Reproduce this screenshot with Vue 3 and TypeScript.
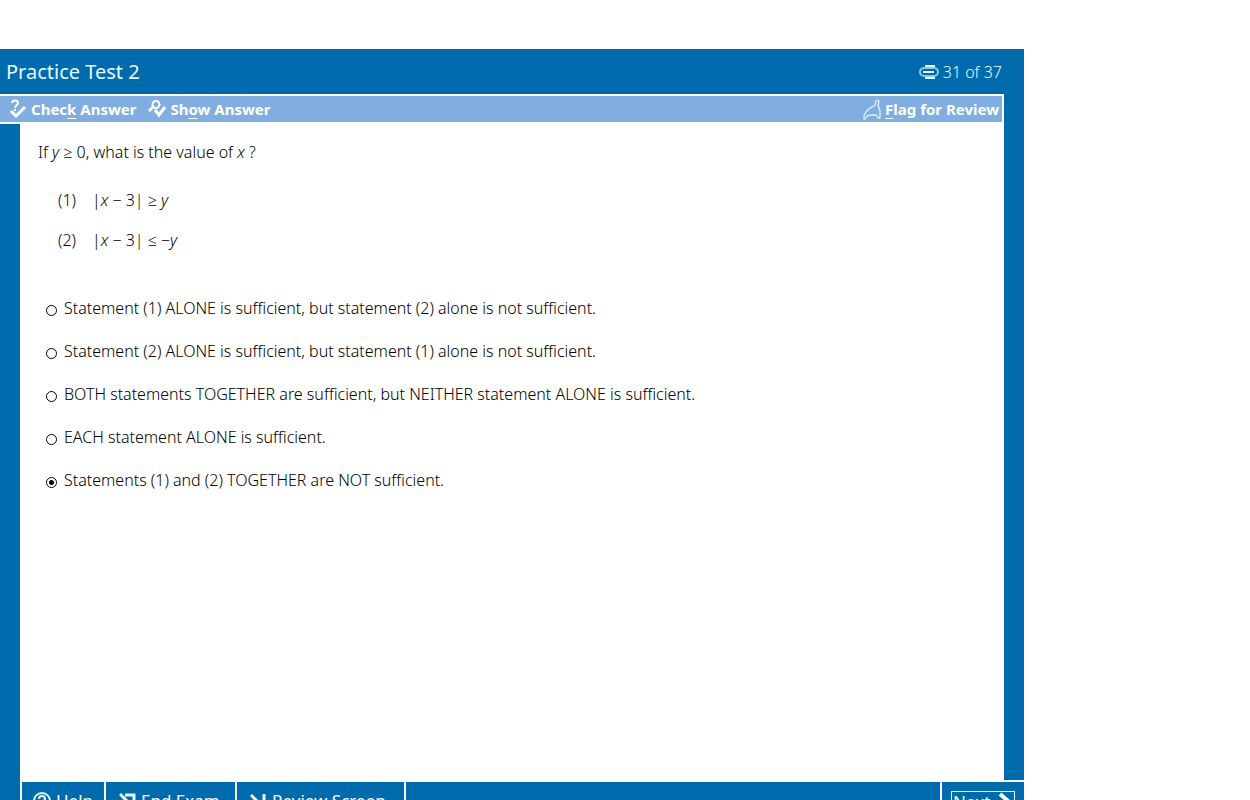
<script setup lang="ts">
import { ref } from 'vue'

const choices: string[] = [
  'Statement (1) ALONE is sufficient, but statement (2) alone is not sufficient.',
  'Statement (2) ALONE is sufficient, but statement (1) alone is not sufficient.',
  'BOTH statements TOGETHER are sufficient, but NEITHER statement ALONE is sufficient.',
  'EACH statement ALONE is sufficient.',
  'Statements (1) and (2) TOGETHER are NOT sufficient.',
]
const picked = ref<number>(4)
</script>

<template>
  <div class="screen">
    <div class="exam">
      <header class="title-bar">
        <h1>Practice Test 2</h1>
        <div class="progress">
          <svg width="20" height="16" viewBox="0 0 20 16" fill="none">
            <rect x="1" y="4" width="18" height="8" rx="4" stroke="#8fc7f0" stroke-width="2" />
            <path d="M6 2H16M4 8H15M6 14H16" stroke="#e4fbff" stroke-width="2" />
          </svg>
          <span>31 of 37</span>
        </div>
      </header>

      <div class="middle">
        <div class="sheet">
          <nav class="tools">
            <button type="button">
              <svg width="18" height="20" viewBox="0 0 18 20" fill="none" stroke="#fff">
                <path d="M3 4C3 1 9 0.5 9 4C9 6 6 6 6 9M6 10V12" stroke-width="2" />
                <path d="M2 12L7 17L16 8" stroke-width="3" />
              </svg>
              <span>Chec<u>k</u> Answer</span>
            </button>
            <button type="button">
              <svg width="18" height="20" viewBox="0 0 18 20" fill="none" stroke="#fff">
                <circle cx="8" cy="5.5" r="3.5" stroke-width="2" />
                <path d="M5 8L1 12" stroke-width="2.5" />
                <path d="M7 11L11 16L17 8" stroke-width="3" />
              </svg>
              <span>Sh<u>o</u>w Answer</span>
            </button>
            <button type="button" class="flag">
              <svg width="18" height="21" viewBox="0 0 18 21" fill="none" stroke="#e0f0ff" stroke-width="1.3" stroke-linejoin="round">
                <path d="M1 20L1 17L3 13L6 10L12 6L13 2L15 1L16 3L15 6L17 12V19L15 19L13 16H8L4 17L2 20Z" />
              </svg>
              <span><u>F</u>lag for Review</span>
            </button>
          </nav>

          <div class="body">
            <div class="rail"></div>
            <main class="question">
              <p class="stem">If <i>y</i> ≥ 0, what is the value of <i>x</i> ?</p>
              <div class="statements">
                <p><span class="num">(1)</span><span>|<i>x</i> − 3| ≥ <i>y</i></span></p>
                <p><span class="num">(2)</span><span>|<i>x</i> − 3| ≤ −<i>y</i></span></p>
              </div>
              <form class="choices">
                <label v-for="(choice, i) in choices" :key="i">
                  <input v-model="picked" type="radio" name="answer" :value="i" />
                  <span>{{ choice }}</span>
                </label>
              </form>
            </main>
          </div>
        </div>
        <div class="rail"></div>
      </div>

      <footer class="bottom">
        <div class="rail"></div>
        <nav class="actions">
          <button type="button" class="help">
            <svg width="20" height="20" viewBox="0 0 20 20" fill="none" stroke="#e4fbff" stroke-width="2">
              <circle cx="10" cy="10" r="8" />
              <path d="M7 8C7 4 13 4 13 8C13 10 10 10 10 12M10 13V15" />
            </svg>
            <span>Help</span>
          </button>
          <button type="button" class="end">
            <svg width="18" height="20" viewBox="0 0 18 20" fill="none" stroke="#e4fbff" stroke-width="3">
              <path d="M1 3L12 14M6 4H15V17H4" />
            </svg>
            <span>End Exam</span>
          </button>
          <button type="button" class="review">
            <svg width="18" height="20" viewBox="0 0 18 20" fill="none" stroke="#e4fbff" stroke-width="3">
              <path d="M1 4L12 15M14 3V16H3" />
            </svg>
            <span>Review Screen</span>
          </button>
          <div class="next">
            <button type="button">
              <span>Next</span>
              <svg width="14" height="20" viewBox="0 0 14 20" fill="none" stroke="#fff" stroke-width="4">
                <path d="M2 3L10 10L2 17" />
              </svg>
            </button>
          </div>
        </nav>
      </footer>
    </div>
  </div>
</template>

<style>
body {
  margin: 0;
  background: #fff;
}
</style>

<style scoped>
.screen {
  box-sizing: border-box;
  height: 100vh;
  padding-top: 49px;
  overflow: hidden;
  font-family: "Noto Sans", "Open Sans", sans-serif;
  font-size: 16px;
  color: #000;
}
.exam {
  display: flex;
  flex-direction: column;
  max-width: 1024px;
  min-height: 768px;
}
h1,
p {
  margin: 0;
  font-weight: inherit;
}
button {
  display: flex;
  align-items: center;
  padding: 0;
  border: 0;
  background: none;
  color: #fff;
  font: inherit;
  cursor: pointer;
}
svg {
  flex: none;
}
.title-bar {
  display: flex;
  align-items: center;
  justify-content: space-between;
  height: 45px;
  padding: 0 22px 0 6px;
  background: #006bac;
  color: #e4fbff;
}
h1 {
  font-size: 20px;
}
.progress {
  display: flex;
  align-items: center;
  gap: 4px;
  font-weight: 300;
}
.middle {
  display: flex;
  flex: 1;
}
.sheet {
  display: flex;
  flex: 1;
  flex-direction: column;
}
.rail {
  flex: none;
  width: 20px;
  background: #006bac;
}
.tools {
  display: flex;
  align-items: center;
  gap: 12px;
  height: 26px;
  padding: 0 3px 0 9px;
  border: solid #fff;
  border-width: 2px 2px 2px 0;
  background: #80aee0;
  font-size: 15px;
  font-weight: 700;
}
.tools button {
  gap: 4px;
}
.tools .flag {
  margin-left: auto;
}
u {
  text-decoration-thickness: 1px;
  text-underline-offset: 3px;
  text-decoration-skip-ink: none;
}
.body {
  display: flex;
  flex: 1;
}
.question {
  flex: 1;
  padding: 18px;
  font-weight: 300;
  line-height: 20px;
}
.statements {
  display: grid;
  gap: 20px;
  padding: 28px 20px 48px;
}
.statements p {
  display: flex;
}
.num {
  width: 34px;
}
.choices {
  display: grid;
  gap: 23px;
  justify-items: start;
  padding-left: 8px;
}
.choices label {
  display: flex;
  align-items: center;
  gap: 7px;
}
.choices input {
  appearance: none;
  box-sizing: border-box;
  width: 11px;
  height: 11px;
  margin: 4px 0 0;
  border: 1px solid #000;
  border-radius: 50%;
}
.choices input:checked {
  background: radial-gradient(circle, #000 0 2px, #fff 3px);
}
.bottom {
  display: flex;
}
.actions {
  display: flex;
  flex: 1;
  gap: 2px;
  height: 35px;
  padding: 2px 0 0 2px;
  background: #fff;
  font-size: 17px;
}
.actions > * {
  background: #006bac;
}
.actions > button {
  gap: 4px;
  padding-left: 10px;
  padding-top: 2px;
}
.help {
  width: 82px;
}
.end {
  width: 129px;
}
.actions > .end,
.actions > .review {
  padding-left: 13px;
}
.review {
  width: 167px;
}
.actions::before {
  order: 1;
  flex: 1;
  background: #006bac;
  content: "";
}
.next {
  order: 2;
  box-sizing: border-box;
  width: 82px;
  padding: 9px 9px 0;
}
.next button {
  box-sizing: border-box;
  justify-content: space-between;
  width: 100%;
  height: 20px;
  padding: 0 2px 0 1px;
  border: 1px solid #e4fbff;
}
</style>
